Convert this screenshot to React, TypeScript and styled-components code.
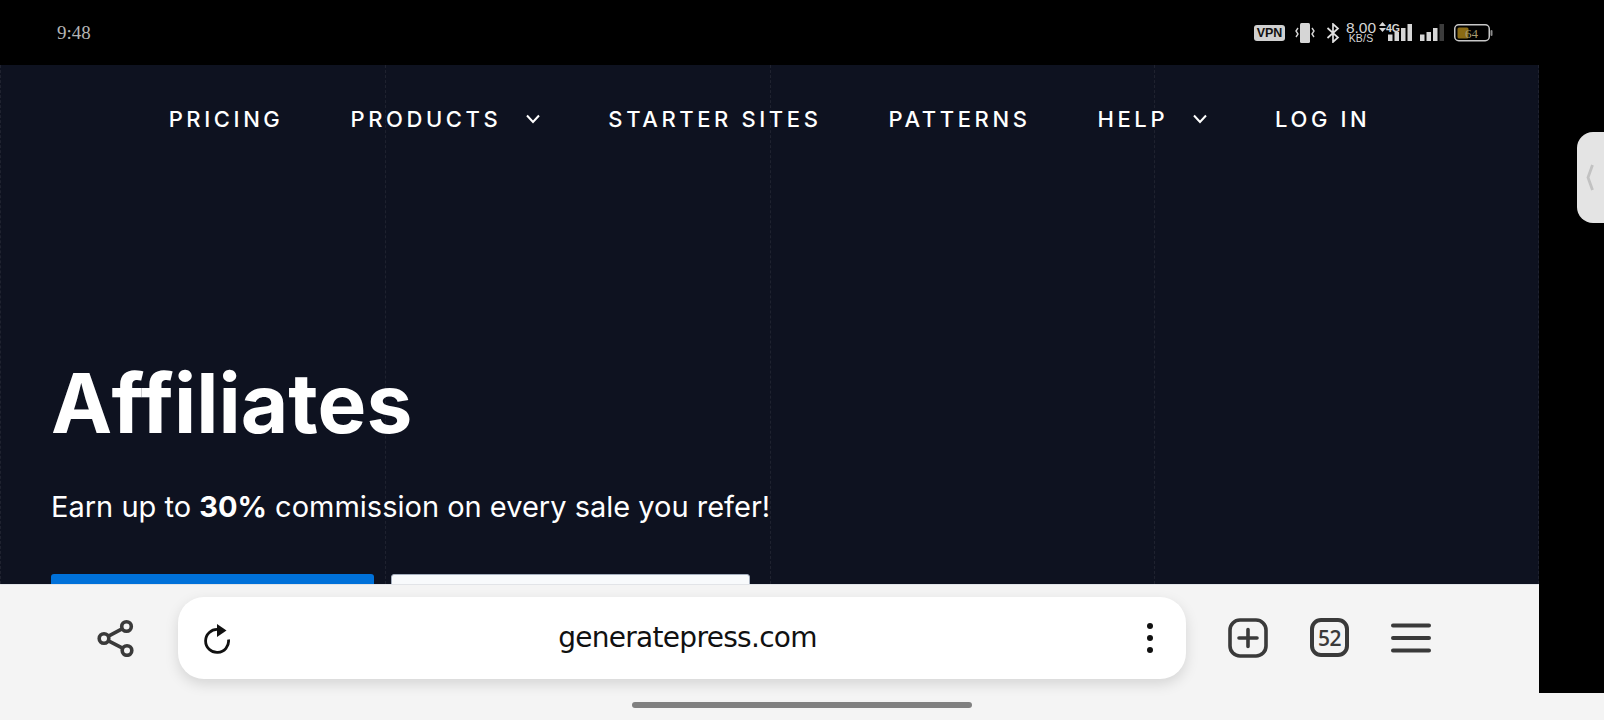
import React from 'react'
import styled, { createGlobalStyle } from 'styled-components'

const GlobalStyle = createGlobalStyle`
  html, body {
    margin: 0;
    padding: 0;
    background: #000;
  }
  * {
    box-sizing: border-box;
  }
`

const Screen = styled.div`
  position: relative;
  width: 1604px;
  height: 720px;
  overflow: hidden;
  background: #000;
  font-family: Inter, 'Liberation Sans', sans-serif;
`

const StatusBar = styled.div`
  height: 65px;
  padding: 0 111px 0 57px;
  display: flex;
  align-items: center;
  justify-content: space-between;
`

const Clock = styled.span`
  font-family: 'Liberation Serif', serif;
  font-size: 19px;
  color: #b4b4b4;
`

const StatusIcons = styled.div`
  display: flex;
  align-items: center;
  height: 24px;
`

const VpnBadge = styled.span`
  width: 31px;
  height: 16px;
  margin-right: 10px;
  border-radius: 3px;
  background: #d0d0d0;
  color: #111;
  font-family: 'Liberation Sans', sans-serif;
  font-size: 12.5px;
  font-weight: 700;
  line-height: 16px;
  text-align: center;
`

const Speed = styled.div`
  width: 32px;
  margin: 0 2px 0 5px;
  display: flex;
  flex-direction: column;
  align-items: center;
  font-family: 'Liberation Sans', sans-serif;
  color: #d6d6d6;
`

const SpeedValue = styled.span`
  font-size: 15.5px;
  line-height: 12px;
`

const SpeedUnit = styled.span`
  font-size: 10.5px;
  line-height: 9px;
  letter-spacing: 0.2px;
`

const Network = styled.div`
  position: relative;
  width: 32px;
  height: 17px;
  margin-left: 2px;
`

const NetworkLabel = styled.span`
  position: absolute;
  top: -2px;
  left: -2px;
  font-family: 'Liberation Sans', sans-serif;
  font-size: 10.5px;
  font-weight: 700;
  color: #d6d6d6;
  white-space: nowrap;
`

const Page = styled.div`
  position: relative;
  width: 1539px;
  height: 519px;
  overflow: hidden;
  background: #0e1220;
  color: #fff;
`

const Guides = styled.div`
  position: absolute;
  inset: 0;
  display: grid;
  grid-template-columns: repeat(4, 1fr);
`

const Guide = styled.div`
  border-left: 1px dashed rgba(255, 255, 255, 0.07);
  &:last-child {
    border-right: 1px dashed rgba(255, 255, 255, 0.07);
  }
`

const Nav = styled.nav`
  position: relative;
  height: 108px;
  display: flex;
  align-items: center;
  justify-content: center;
  gap: 67px;
`

const NavItem = styled.a`
  display: flex;
  align-items: center;
  gap: 24px;
  font-size: 22px;
  font-weight: 500;
  letter-spacing: 3.6px;
  white-space: nowrap;
`

const Hero = styled.section`
  position: relative;
  padding: 181px 0 0 51px;
`

const Title = styled.h1`
  margin: 0;
  font-size: 82px;
  line-height: 100px;
  font-weight: 700;
`

const Subtitle = styled.p`
  margin: 31px 0 0;
  font-size: 29px;
  line-height: 44px;
  font-weight: 400;
  white-space: nowrap;

  strong {
    font-weight: 700;
  }
`

const Buttons = styled.div`
  margin-top: 45px;
  display: flex;
  gap: 17px;
`

const HeroButton = styled.a<{ $light?: boolean }>`
  width: ${p => (p.$light ? '359px' : '323px')};
  height: 60px;
  border-radius: 3px;
  background: ${p => (p.$light ? '#f8fafc' : '#0071d9')};
  border: ${p => (p.$light ? '1px solid #a4aebd' : 'none')};
`

const Toolbar = styled.div`
  width: 1539px;
  height: 109px;
  padding: 12px 0 15px;
  display: flex;
  align-items: center;
  background: #f4f4f4;
  border-top: 1px solid #e2e4e8;
`

const ShareButton = styled.div`
  width: 178px;
  padding-left: 97px;
  display: flex;
`

const AddressBar = styled.div`
  position: relative;
  width: 1008px;
  height: 82px;
  border-radius: 26px;
  display: flex;
  align-items: center;
  justify-content: space-between;
  padding: 0 32px 0 26px;
  background: #fff;
  box-shadow: 0 5px 14px rgba(0, 0, 0, 0.13);
`

const Url = styled.span`
  position: absolute;
  left: 0;
  right: 0;
  margin-left: 11px;
  text-align: center;
  font-family: 'DejaVu Sans', sans-serif;
  font-size: 28px;
  letter-spacing: -0.7px;
  color: #111;
`

const ToolbarActions = styled.div`
  margin-left: 42px;
  display: flex;
  align-items: center;
  gap: 42px;
`

const TabCount = styled.div`
  width: 39px;
  height: 39px;
  border: 4px solid #3a3a3a;
  border-radius: 11px;
  display: flex;
  align-items: center;
  justify-content: center;
  font-family: 'Open Sans', sans-serif;
  font-size: 21px;
  font-weight: 600;
  letter-spacing: -0.5px;
  color: #3a3a3a;
`

const HomeStrip = styled.div`
  height: 27px;
  padding-top: 9px;
  display: flex;
  justify-content: center;
  background: #f4f4f4;
`

const HomeBar = styled.div`
  width: 340px;
  height: 6px;
  border-radius: 3px;
  background: #808080;
`

const SideHandle = styled.div`
  position: absolute;
  top: 132px;
  right: 0;
  width: 27px;
  height: 91px;
  padding-left: 9px;
  display: flex;
  align-items: center;
  border-radius: 16px 0 0 16px;
  background: #e4e4e4;
`

const Caret = () => (
  <svg width="16" height="10" viewBox="0 0 16 10" fill="none" stroke="#fff" strokeWidth="2">
    <path d="M2 1.5 8 8l6-6.5" />
  </svg>
)

const VibrateIcon = () => (
  <svg width="20" height="20" viewBox="0 0 20 20" fill="none" stroke="#d6d6d6" strokeWidth="1.4" style={{ marginRight: 11 }}>
    <rect x="5" y="0" width="10" height="20" rx="1.5" fill="#d6d6d6" stroke="none" />
    <path d="M3 5 1 8l2 3-2 3M17 5l2 3-2 3 2 3" />
  </svg>
)

const BluetoothIcon = () => (
  <svg width="14" height="20" viewBox="0 0 14 20" fill="none" stroke="#e0e0e0" strokeWidth="1.7">
    <path d="M1.5 5 12 14.5 7 19V1l5 4.5L1.5 15" />
  </svg>
)

const ArrowsIcon = () => (
  <svg width="7" height="10" viewBox="0 0 7 10" fill="#d6d6d6" style={{ margin: '-12px 0 0 0' }}>
    <path d="M3.5 0 7 4H0zM0 6h7l-3.5 4z" />
  </svg>
)

const SignalBars = ({ dim }: { dim?: boolean }) => (
  <svg width="26" height="17" viewBox="0 0 26 17" fill="#d6d6d6">
    <rect x="0" y="10.5" width="4.5" height="6.5" />
    <rect x="6.5" y="8" width="4.5" height="9" />
    <rect x="13" y="4" width="4.5" height="13" />
    <rect x="19.5" y="0" width="4.5" height="17" fill={dim ? '#3c3c3c' : '#d6d6d6'} />
  </svg>
)

const BatteryIcon = () => (
  <svg width="39" height="18" viewBox="0 0 39 18" style={{ marginLeft: 8 }}>
    <rect x="0.75" y="0.75" width="34.5" height="16" rx="4" fill="none" stroke="#c8c8c8" strokeWidth="1.5" />
    <rect x="3.5" y="3.5" width="11" height="11" rx="1.5" fill="#8a6a14" />
    <rect x="36.5" y="6" width="2" height="6" rx="1" fill="#8a8a8a" />
    <text x="11" y="13.5" fontFamily="Liberation Serif, serif" fontSize="13" fill="#a89a70">64</text>
  </svg>
)

const ShareIcon = () => (
  <svg width="38" height="38" viewBox="0 0 38 38" fill="none" stroke="#3a3a3a" strokeWidth="3.6">
    <circle cx="29.5" cy="7.5" r="4.8" />
    <circle cx="7" cy="19.5" r="4.8" />
    <circle cx="30" cy="31.5" r="4.8" />
    <path d="M11 17.3 25.5 9.7M11 21.7 26 29.3" />
  </svg>
)

const RefreshIcon = () => (
  <svg width="28" height="32" viewBox="0 0 28 32" fill="none" stroke="#111" strokeWidth="2.8">
    <path d="M24.5 17.5A11.5 11.5 0 1 1 14 7.5" />
    <path d="M13 2v13l9.5-6.5z" fill="#111" stroke="none" />
  </svg>
)

const MoreIcon = () => (
  <svg width="8" height="32" viewBox="0 0 8 32" fill="#111">
    <circle cx="4" cy="4" r="3" />
    <circle cx="4" cy="16" r="3" />
    <circle cx="4" cy="28" r="3" />
  </svg>
)

const NewTabIcon = () => (
  <svg width="40" height="40" viewBox="0 0 40 40" fill="none" stroke="#3a3a3a" strokeWidth="3.6" strokeLinecap="round">
    <rect x="2" y="2" width="36" height="36" rx="10" />
    <path d="M11 20h18M20 11.5v17" />
  </svg>
)

const MenuIcon = () => (
  <svg width="40" height="30" viewBox="0 0 40 30" fill="none" stroke="#3a3a3a" strokeWidth="4" strokeLinecap="round">
    <path d="M2 2.5h36M2 15h36M2 27.5h36" />
  </svg>
)

const HandleChevron = () => (
  <svg width="8" height="27" viewBox="0 0 8 27" fill="none" stroke="#c2c2c2" strokeWidth="2.8">
    <path d="M6.5 1 2 13.5 6.5 26" />
  </svg>
)

export default function App() {
  return (
    <Screen>
      <GlobalStyle />
      <StatusBar>
        <Clock>9:48</Clock>
        <StatusIcons>
          <VpnBadge>VPN</VpnBadge>
          <VibrateIcon />
          <BluetoothIcon />
          <Speed>
            <SpeedValue>8.00</SpeedValue>
            <SpeedUnit>KB/S</SpeedUnit>
          </Speed>
          <ArrowsIcon />
          <Network>
            <NetworkLabel>4G</NetworkLabel>
            <SignalBars />
          </Network>
          <SignalBars dim />
          <BatteryIcon />
        </StatusIcons>
      </StatusBar>

      <Page>
        <Guides>
          <Guide />
          <Guide />
          <Guide />
          <Guide />
        </Guides>
        <Nav>
          <NavItem>PRICING</NavItem>
          <NavItem>
            PRODUCTS
            <Caret />
          </NavItem>
          <NavItem>STARTER SITES</NavItem>
          <NavItem>PATTERNS</NavItem>
          <NavItem>
            HELP
            <Caret />
          </NavItem>
          <NavItem>LOG IN</NavItem>
        </Nav>
        <Hero>
          <Title>Affiliates</Title>
          <Subtitle>
            Earn up to <strong>30%</strong> commission on every sale you refer!
          </Subtitle>
          <Buttons>
            <HeroButton />
            <HeroButton $light />
          </Buttons>
        </Hero>
      </Page>

      <Toolbar>
        <ShareButton>
          <ShareIcon />
        </ShareButton>
        <AddressBar>
          <RefreshIcon />
          <Url>generatepress.com</Url>
          <MoreIcon />
        </AddressBar>
        <ToolbarActions>
          <NewTabIcon />
          <TabCount>52</TabCount>
          <MenuIcon />
        </ToolbarActions>
      </Toolbar>

      <HomeStrip>
        <HomeBar />
      </HomeStrip>

      <SideHandle>
        <HandleChevron />
      </SideHandle>
    </Screen>
  )
}
